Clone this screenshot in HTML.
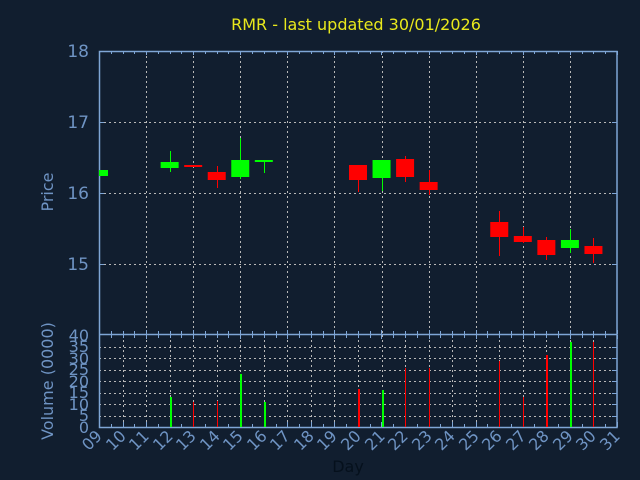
<!DOCTYPE html>
<html><head><meta charset="utf-8"><style>
html,body{margin:0;padding:0;background:#111e2f;}
svg{display:block}
text{font-family:"DejaVu Sans","Liberation Sans",sans-serif;}
</style></head><body>
<svg id="s" width="640" height="480" xmlns="http://www.w3.org/2000/svg">
<rect width="640" height="480" fill="#111e2f"/>
<g id="grid"></g>
<g id="candles"></g>
<text x="356" y="30" fill="#e8e81c" font-size="16" text-anchor="middle">RMR - last updated 30/01/2026</text>
<g fill="#6f94c4" font-size="17" text-anchor="end">
<text x="89" y="57">18</text><text x="89" y="128">17</text><text x="89" y="199">16</text><text x="89" y="270">15</text>
</g>
<g fill="#6f94c4" font-size="16" text-anchor="end">
<text x="89" y="341">40</text><text x="89" y="352">35</text><text x="89" y="364">30</text><text x="89" y="375">25</text><text x="89" y="387">20</text><text x="89" y="398">15</text><text x="89" y="410">10</text><text x="89" y="421">5</text><text x="89" y="433">0</text>
</g>
<text transform="translate(53,192) rotate(-90)" fill="#6f94c4" font-size="16" text-anchor="middle">Price</text>
<text transform="translate(53,381) rotate(-90)" fill="#6f94c4" font-size="16" text-anchor="middle">Volume (0000)</text>
<text x="348" y="472" fill="#05101c" font-size="16" text-anchor="middle">Day</text>
<g id="xl" fill="#6f94c4" font-size="16" text-anchor="end">
<text transform="translate(103,437) rotate(-45)">09</text>
<text transform="translate(127,437) rotate(-45)">10</text>
<text transform="translate(150,437) rotate(-45)">11</text>
<text transform="translate(174,437) rotate(-45)">12</text>
<text transform="translate(197,437) rotate(-45)">13</text>
<text transform="translate(221,437) rotate(-45)">14</text>
<text transform="translate(244,437) rotate(-45)">15</text>
<text transform="translate(268,437) rotate(-45)">16</text>
<text transform="translate(291,437) rotate(-45)">17</text>
<text transform="translate(315,437) rotate(-45)">18</text>
<text transform="translate(338,437) rotate(-45)">19</text>
<text transform="translate(362,437) rotate(-45)">20</text>
<text transform="translate(386,437) rotate(-45)">21</text>
<text transform="translate(409,437) rotate(-45)">22</text>
<text transform="translate(433,437) rotate(-45)">23</text>
<text transform="translate(456,437) rotate(-45)">24</text>
<text transform="translate(480,437) rotate(-45)">25</text>
<text transform="translate(503,437) rotate(-45)">26</text>
<text transform="translate(527,437) rotate(-45)">27</text>
<text transform="translate(550,437) rotate(-45)">28</text>
<text transform="translate(574,437) rotate(-45)">29</text>
<text transform="translate(597,437) rotate(-45)">30</text>
<text transform="translate(621,437) rotate(-45)">31</text>
</g>
</svg>
<script>
var NS="http://www.w3.org/2000/svg";
function el(p,t,a){var e=document.createElementNS(NS,t);for(var k in a)e.setAttribute(k,a[k]);p.appendChild(e);return e;}
var g=document.getElementById('grid'),c=document.getElementById('candles');
function X(d){return 99+(d-9)*23.545;}
var dash={stroke:"#b8b8b8","stroke-width":1,"stroke-dasharray":"2,3"};
[122,193,264].forEach(function(y){el(g,'line',Object.assign({x1:99,x2:617,y1:y+.5,y2:y+.5},dash));});
for(var d=11;d<=29;d+=2){var x=Math.round(X(d))+.5;el(g,'line',Object.assign({x1:x,x2:x,y1:51,y2:334},dash));}
for(var i=1;i<8;i++){var y=Math.round(427-i*11.5)+.5;el(g,'line',Object.assign({x1:99,x2:617,y1:y,y2:y},dash));el(g,'line',{x1:612,x2:617,y1:y,y2:y,stroke:"#7fa6d6"});}
for(var d=10;d<=30;d++){var x=Math.round(X(d))+.5;el(g,'line',Object.assign({x1:x,x2:x,y1:335,y2:427},dash));}
var ax={stroke:"#7fa6d6","stroke-width":1.5,fill:"none"};
el(g,'rect',Object.assign({x:99.5,y:51.5,width:517.5,height:376},ax));
el(g,'line',Object.assign({x1:99,x2:617,y1:334.5,y2:334.5},ax));
[122,193,264].forEach(function(y){el(g,'line',{x1:99,x2:104,y1:y+.5,y2:y+.5,stroke:"#7fa6d6"});el(g,'line',{x1:612,x2:617,y1:y+.5,y2:y+.5,stroke:"#7fa6d6"});});
for(var h=0;h<=44;h++){var x=Math.round(99+h*11.77)+.5;var dd=9+h/2;
 var majP=(h%2==0)&&(dd%2==1);var majV=(h%2==0);
 el(g,'line',{x1:x,x2:x,y1:51,y2:51+(majP?4:3),stroke:"#7fa6d6"});
 el(g,'line',{x1:x,x2:x,y1:334,y2:334-(majP?4:3),stroke:"#7fa6d6"});
 el(g,'line',{x1:x,x2:x,y1:335,y2:335+(majP?4:3),stroke:"#7fa6d6"});
 el(g,'line',{x1:x,x2:x,y1:427,y2:427-(majV?5:3),stroke:"#7fa6d6"});
}
var G="#00ff00",R="#ff0000";
var cs=[[9,170,176,170,176,G],[12,162,168,151,172,G],[13,165,167,165,167,R],[14,172,180,166,188,R],[15,160,177,138,179,G],[16,160,162,160,173,G],
[20,165,180,165,192,R],[21,160,178,160,191,G],[22,159,177,156,182,R],[23,182,190,170,195,R],[26,222,237,211,256,R],[27,236,242,227,243,R],[28,240,255,237,260,R],[29,240,248,229,253,G],[30,246,254,238,263,R]];
cs.forEach(function(k){var x=X(k[0]);var l=Math.max(99,x-9),r=x+9;
 el(c,'line',{x1:Math.round(x)+.5,x2:Math.round(x)+.5,y1:k[3],y2:k[4],stroke:k[5],"stroke-width":1});
 el(c,'rect',{x:l,y:k[1],width:r-l,height:Math.max(2,k[2]-k[1]),fill:k[5]});});
var vs=[[12,397,G,2],[13,402,R,1],[14,401,R,1],[15,374,G,2],[16,402,G,2],[20,389,R,2],[21,390,G,2],[22,368,R,1],[23,368,R,1],[26,361,R,1],[27,397,R,1],[28,355,R,2],[29,342,G,2],[30,342,R,1]];
vs.forEach(function(v){var x=Math.round(X(v[0]));el(c,'rect',{x:x,y:v[1],width:v[3],height:427-v[1],fill:v[2]});});
</script>
</body></html>
